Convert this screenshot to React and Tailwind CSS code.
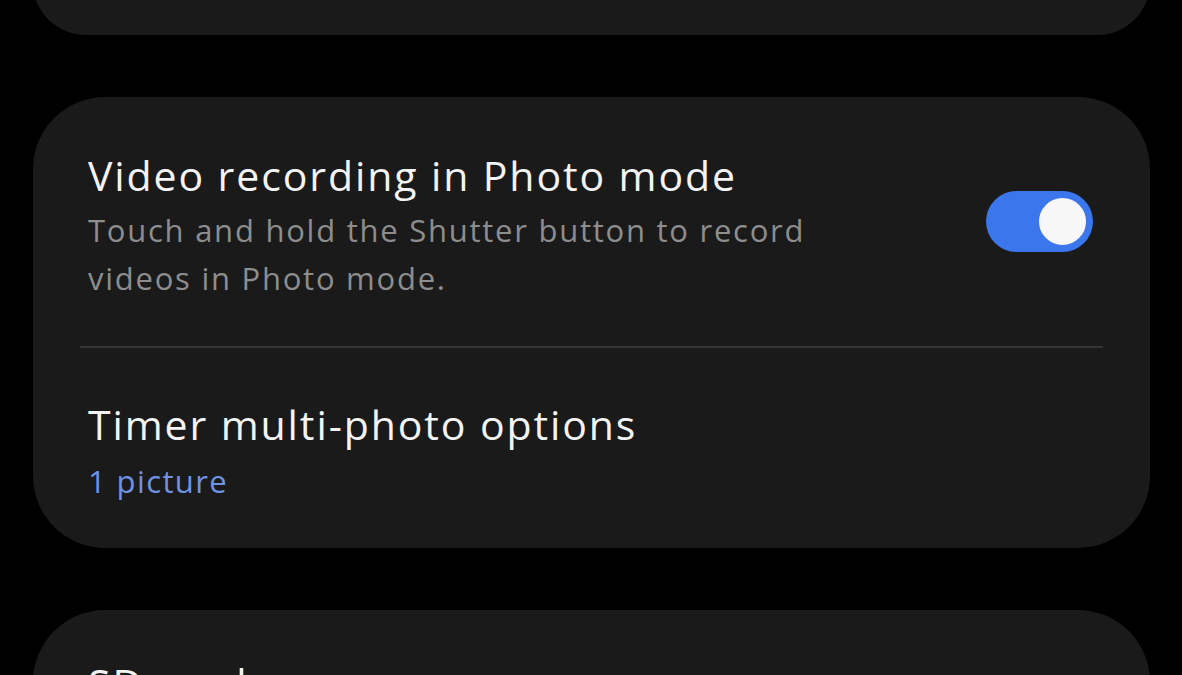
import React, { useState } from 'react';

function Toggle({ on, onChange }) {
  return (
    <button
      onClick={() => onChange(!on)}
      className={`relative mb-[10px] w-[107px] h-[61px] rounded-full shrink-0 ${on ? 'bg-[#3b76ec]' : 'bg-[#4a4a4a]'}`}
    >
      <span
        className={`absolute top-[5px] w-[51px] h-[51px] rounded-full bg-[#f7f7f7] border-[2px] border-[#3b76ec] ${on ? 'right-[5px]' : 'left-[5px]'}`}
      />
    </button>
  );
}

export default function App() {
  const [videoInPhoto, setVideoInPhoto] = useState(true);

  return (
    <div className="h-[675px] overflow-hidden bg-black" style={{ fontFamily: '"Open Sans", Roboto, sans-serif' }}>
      <div className="flex flex-col gap-[62px] pl-[33px] pr-[32px]">
        {/* previous group, cut off at top */}
        <div className="-mt-[70px] h-[105px] rounded-[72px] bg-[#1a1a1a]" />

        {/* Video / timer group */}
        <div className="rounded-[72px] bg-[#1a1a1a] pt-[53px] pb-[43px]">
          <div className="flex items-center justify-between pl-[55px] pr-[57px] pb-[44px]">
            <div>
              <div className="text-[41px] leading-[50px] tracking-[1.9px] text-[#f3f3f3]">Video recording in Photo mode</div>
              <div className="mt-[6px] text-[31px] leading-[48px] tracking-[1.75px] text-[#8d8d8d] w-[770px]">
                Touch and hold the Shutter button to record videos in Photo mode.
              </div>
            </div>
            <Toggle on={videoInPhoto} onChange={setVideoInPhoto} />
          </div>

          <div className="mx-[47px] h-[2px] bg-[#353535]" />

          <div className="pl-[55px] pt-[51px]">
            <div className="text-[41px] leading-[50px] tracking-[1.9px] text-[#f3f3f3]">Timer multi-photo options</div>
            <div className="mt-[8px] text-[31px] leading-[48px] tracking-[1.4px] text-[#6f92e4]">1 picture</div>
          </div>
        </div>

        {/* next group, cut off at bottom */}
        <div className="rounded-[72px] bg-[#1a1a1a] pl-[55px] pt-[48px] h-[200px]">
          <div className="text-[41px] leading-[50px] tracking-[1.9px] text-[#f3f3f3]">SD card</div>
        </div>
      </div>
    </div>
  );
}
